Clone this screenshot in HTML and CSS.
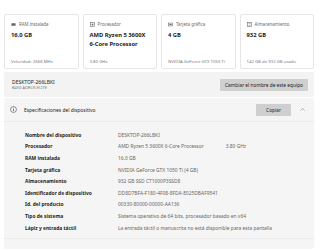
FILE: index.html
```html
<!DOCTYPE html>
<html lang="es">
<head>
    <meta charset="UTF-8">
    <meta name="viewport" content="width=device-width, initial-scale=1.0">
    <title>Información</title>
    <link rel="stylesheet" href="styles.css">
</head>
<body>
<div class="page">
    <div class="cards">
        <div class="card">
            <div class="card-label">
                <svg class="card-icon" viewBox="0 0 6 6"><rect x="0.5" y="1.5" width="5" height="3" fill="#666"/></svg>
                RAM instalada
            </div>
            <div class="card-value">16,0 GB</div>
            <div class="card-foot">Velocidad: 2666 MHz</div>
        </div>
        <div class="card">
            <div class="card-label">
                <svg class="card-icon" viewBox="0 0 6 6"><rect x="0.8" y="0.8" width="4.4" height="4.4" fill="none" stroke="#666" stroke-width="0.7"/><rect x="2" y="2" width="2" height="2" fill="#666"/></svg>
                Procesador
            </div>
            <div class="card-value">AMD Ryzen 5 3600X<br>6-Core Processor</div>
            <div class="card-foot">3.80 GHz</div>
        </div>
        <div class="card">
            <div class="card-label">
                <svg class="card-icon" viewBox="0 0 6 6"><rect x="0.5" y="1.3" width="5" height="3.4" fill="none" stroke="#666" stroke-width="0.7"/><rect x="1.7" y="2.4" width="2.6" height="1.2" fill="#666"/></svg>
                Tarjeta gráfica
            </div>
            <div class="card-value">4 GB</div>
            <div class="card-foot">NVIDIA GeForce GTX 1050 Ti</div>
        </div>
        <div class="card">
            <div class="card-label">
                <svg class="card-icon" viewBox="0 0 6 6"><rect x="0.8" y="0.5" width="4.4" height="5" fill="none" stroke="#666" stroke-width="0.7"/><line x1="1.8" y1="2" x2="4.2" y2="2" stroke="#666" stroke-width="0.6"/><line x1="1.8" y1="4" x2="4.2" y2="4" stroke="#666" stroke-width="0.6"/></svg>
                Almacenamiento
            </div>
            <div class="card-value">932 GB</div>
            <div class="card-foot">142 GB de 932 GB usado</div>
        </div>
    </div>

    <div class="device">
        <div class="device-name">
            <div class="device-title">DESKTOP-266LBKI</div>
            <div class="device-model">B450 AORUS ELITE</div>
        </div>
        <button class="btn">Cambiar el nombre de este equipo</button>
    </div>

    <div class="specs">
        <div class="specs-head">
            <svg class="info-icon" viewBox="0 0 8 8"><circle cx="4" cy="4" r="3.4" fill="none" stroke="#333" stroke-width="0.6"/><line x1="4" y1="3.4" x2="4" y2="5.8" stroke="#333" stroke-width="0.7"/><circle cx="4" cy="2.3" r="0.45" fill="#333"/></svg>
            <span class="specs-title">Especificaciones del dispositivo</span>
            <button class="btn btn-copy">Copiar</button>
            <svg class="chevron" viewBox="0 0 8 8"><polyline points="1.5,5.2 4,2.8 6.5,5.2" fill="none" stroke="#888" stroke-width="0.7"/></svg>
        </div>
        <div class="specs-body">
            <div class="row"><span class="key">Nombre del dispositivo</span><span class="val">DESKTOP-266LBKI</span></div>
            <div class="row"><span class="key">Procesador</span><span class="val">AMD Ryzen 5 3600X 6-Core Processor</span><span class="val extra">3.80 GHz</span></div>
            <div class="row"><span class="key">RAM instalada</span><span class="val">16,0 GB</span></div>
            <div class="row"><span class="key">Tarjeta gráfica</span><span class="val">NVIDIA GeForce GTX 1050 Ti (4 GB)</span></div>
            <div class="row"><span class="key">Almacenamiento</span><span class="val">932 GB SSD CT1000P3SSD8</span></div>
            <div class="row"><span class="key">Identificador de dispositivo</span><span class="val">DD8D7BFA-F180-4F08-8FDA-E025DBAF9541</span></div>
            <div class="row"><span class="key">Id. del producto</span><span class="val">00330-80000-00000-AA136</span></div>
            <div class="row"><span class="key">Tipo de sistema</span><span class="val">Sistema operativo de 64 bits, procesador basado en x64</span></div>
            <div class="row"><span class="key">Lápiz y entrada táctil</span><span class="val">La entrada táctil o manuscrita no está disponible para esta pantalla</span></div>
        </div>
        <div class="specs-foot"></div>
    </div>
</div>
</body>
</html>
```

FILE: styles.css
```css
html, body {
    margin: 0;
    background: #fff;
}

body {
    font-family: "Noto Sans", "Open Sans", sans-serif;
    font-size: 4.9px;
    color: #1b1b1b;
}

.page {
    padding: 14px 6px 0 4px;
}

.cards {
    display: grid;
    grid-template-columns: repeat(4, 1fr);
    gap: 4px;
}

.card {
    height: 55px;
    box-sizing: border-box;
    border: 1px solid #e6e6e6;
    border-radius: 2px;
    padding: 6px 4px 4px 6px;
    display: flex;
    flex-direction: column;
    overflow: hidden;
}

.card-label {
    display: flex;
    align-items: center;
    gap: 3px;
    color: #6a6a6a;
    font-size: 4.4px;
    line-height: 6px;
}

.card-icon {
    width: 5px;
    height: 5px;
}

.card-value {
    margin-top: 4px;
    font-weight: 700;
    font-size: 5.8px;
    line-height: 9px;
    white-space: nowrap;
}

.card-foot {
    margin-top: auto;
    color: #7a7a7a;
    font-size: 4.3px;
    line-height: 6px;
    white-space: nowrap;
}

.device {
    margin-top: 3px;
    height: 25px;
    background: #f3f3f3;
    border-radius: 2px;
    display: flex;
    align-items: center;
    justify-content: space-between;
    padding: 0 6px 0 8px;
}

.device-title {
    font-size: 5px;
    line-height: 5px;
}

.device-model {
    font-size: 4px;
    line-height: 5px;
    color: #777;
}

.btn {
    font-family: inherit;
    font-size: 4.8px;
    color: #222;
    background: #cfcfcf;
    border: none;
    border-radius: 1px;
    height: 12px;
    padding: 0 5px;
}

.specs {
    margin-top: 1px;
    background: #f5f5f5;
    border-radius: 2px;
}

.specs-head {
    height: 23px;
    display: flex;
    align-items: center;
    padding: 0 8px 0 6px;
    border-bottom: 1px solid #ebebeb;
}

.info-icon {
    width: 7px;
    height: 7px;
}

.specs-title {
    margin-left: 7px;
    flex: 1;
}

.btn-copy {
    width: 35px;
    padding: 0;
}

.chevron {
    width: 7px;
    height: 7px;
    margin-left: 8px;
}

.specs-body {
    padding: 7px 0 5px 21px;
}

.row {
    display: flex;
    height: 11.6px;
    align-items: center;
}

.key {
    width: 93px;
    font-weight: 700;
    color: #1e1e1e;
}

.val {
    color: #666;
    white-space: nowrap;
}

.extra {
    margin-left: 22px;
}

.specs-foot {
    height: 10px;
    border-top: 1px solid #ebebeb;
}
```
